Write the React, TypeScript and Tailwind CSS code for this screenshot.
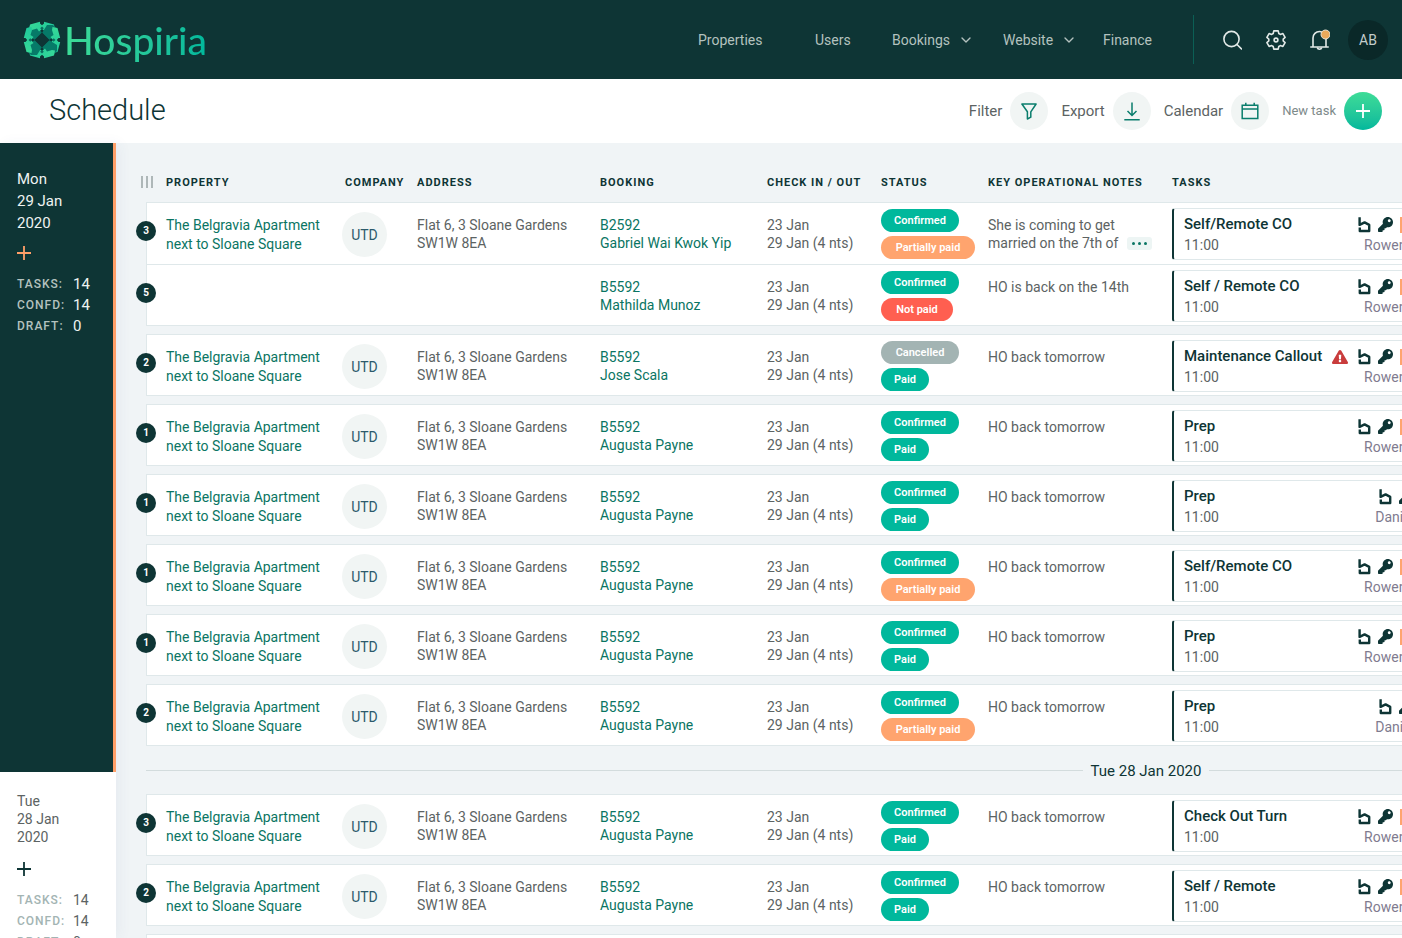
import { Fragment } from "react";
import type { ReactNode } from "react";
import clsx from "clsx";
import { ChevronDown } from "lucide-react";
import { FaExclamationTriangle, FaKey } from "react-icons/fa";

type Status = "Confirmed" | "Cancelled" | "Paid" | "Partially paid" | "Not paid";

type Booking = {
  count: number;
  property?: boolean;
  code: string;
  guest: string;
  status: Status;
  payment: Status;
  notes: string[];
  more?: boolean;
  task: string;
  person: string;
  warning?: boolean;
};

type Day = {
  label: string;
  groups: Booking[][];
};

const statusStyles: Record<Status, string> = {
  Confirmed: "bg-[#00b89c] w-[78px]",
  Cancelled: "bg-[#a3b4b3] w-[78px]",
  Paid: "bg-[#00b89c] w-12",
  "Partially paid": "bg-[#ffa46e] w-[94px]",
  "Not paid": "bg-[#ff5f50] w-[72px]",
};

const augusta = (
  count: number,
  payment: Status,
  task: string,
  person = "Rowena"
): Booking[] => [
  {
    count,
    property: true,
    code: "B5592",
    guest: "Augusta Payne",
    status: "Confirmed",
    payment,
    notes: ["HO back tomorrow"],
    task,
    person,
  },
];

const days: Day[] = [
  {
    label: "Mon 29 Jan 2020",
    groups: [
      [
        {
          count: 3,
          property: true,
          code: "B2592",
          guest: "Gabriel Wai Kwok Yip",
          status: "Confirmed",
          payment: "Partially paid",
          notes: ["She is coming to get", "married on the 7th of"],
          more: true,
          task: "Self/Remote CO",
          person: "Rowena",
        },
        {
          count: 5,
          code: "B5592",
          guest: "Mathilda Munoz",
          status: "Confirmed",
          payment: "Not paid",
          notes: ["HO is back on the 14th"],
          task: "Self / Remote CO",
          person: "Rowena",
        },
      ],
      [
        {
          count: 2,
          property: true,
          code: "B5592",
          guest: "Jose Scala",
          status: "Cancelled",
          payment: "Paid",
          notes: ["HO back tomorrow"],
          task: "Maintenance Callout",
          person: "Rowena",
          warning: true,
        },
      ],
      augusta(1, "Paid", "Prep"),
      augusta(1, "Paid", "Prep", "Daniel"),
      augusta(1, "Partially paid", "Self/Remote CO"),
      augusta(1, "Paid", "Prep"),
      augusta(2, "Partially paid", "Prep", "Daniel"),
    ],
  },
  {
    label: "Tue 28 Jan 2020",
    groups: [
      augusta(3, "Paid", "Check Out Turn"),
      augusta(2, "Paid", "Self / Remote"),
      augusta(1, "Paid", "Prep"),
    ],
  },
];

function Logo() {
  return (
    <a href="#home" className="flex items-center gap-[3px]">
      <svg width="38" height="38" viewBox="0 0 38 38" aria-hidden="true">
        <defs>
          <linearGradient id="mark" x1="0" x2="1" y1="0" y2="0">
            <stop offset="0" stopColor="#37d998" />
            <stop offset="1" stopColor="#1fc99b" />
          </linearGradient>
        </defs>
        {[0, 90, 180, 270].map((angle) => (
          <g key={angle} transform={`rotate(${angle} 19 19)`}>
            <path d="M4 8 8 4h6l5 8-7 7-8-5z" fill="#067a68" />
            <path
              d="M7 3.500 17 .8v1.700l2 1.700 2-1.700V.8l10 2.700 1 5-3 .5-5-1.500-2 3-3-2.500-3 2.500-2-3L9 9l-3-.5z"
              fill="url(#mark)"
            />
            <path d="m19 5.500 1.800 1.800L19 9.100l-1.800-1.800z" fill="#0a6d5f" />
          </g>
        ))}
        <path d="m19 11.500 7.500 7.500-7.500 7.500-7.500-7.500z" fill="#0e3535" />
      </svg>
      <span className="bg-gradient-to-r from-[#3ddc97] to-[#00b89c] bg-clip-text font-[Lato] text-[39px] leading-[48px] font-medium text-transparent">
        Hospiria
      </span>
    </a>
  );
}

function SearchIcon() {
  return (
    <svg width="20" height="20" viewBox="0 0 20 20" fill="none" stroke="currentColor" strokeWidth="1.600">
      <circle cx="9.500" cy="9" r="7.600" />
      <path d="m15 14.500 4.500 4.500" strokeLinecap="round" />
    </svg>
  );
}

function GearIcon() {
  return (
    <svg width="20" height="20" viewBox="0 0 20 20" fill="none" stroke="currentColor" strokeWidth="1.600" strokeLinejoin="round">
      <path d="M7.800 .9h4.400l.6 2.600 1.500.9 2.600-.8 2.200 3.800-1.900 1.700v1.800l1.900 1.700-2.200 3.800-2.600-.8-1.500.9-.6 2.600H7.800l-.6-2.600-1.500-.9-2.600.8L.9 12.600l1.900-1.700V9.100L.9 7.400l2.200-3.800 2.600.8 1.500-.9z" />
      <circle cx="10" cy="10" r="1.900" />
    </svg>
  );
}

function BellIcon() {
  return (
    <svg width="20" height="22" viewBox="0 0 20 22" fill="none" stroke="currentColor" strokeWidth="1.600">
      <path d="M.8 18h17.400M3 18V9a6.500 6.500 0 0 1 13 0v9" strokeLinecap="round" />
      <path d="M7.200 18.500a2.400 2.400 0 0 0 4.600 0" />
      <circle cx="15.500" cy="5.500" r="4.500" fill="#e9a95b" stroke="#e6e2d6" strokeWidth="1" />
    </svg>
  );
}

function PlusIcon() {
  return (
    <svg width="14" height="14" viewBox="0 0 14 14" stroke="currentColor" strokeWidth="1.800" aria-hidden="true">
      <path d="M7 0v14M0 7h14" />
    </svg>
  );
}

function HouseIcon() {
  return (
    <svg width="15" height="16" viewBox="0 0 15 16" fill="none" stroke="#0e3535" strokeWidth="2.400" strokeLinejoin="round" aria-hidden="true">
      <path d="M2.600 .3V7.900L7.600 5.400 12.200 7.900V14H2.800V10.400" />
    </svg>
  );
}

function Header() {
  const link = "flex items-center gap-2 text-sm text-[#b4c2bf]";

  return (
    <header className="flex h-[79px] shrink-0 items-center justify-between bg-[#0e3535] pr-[14px] pl-[23px]">
      <Logo />
      <div className="flex items-center">
        <nav className="grid grid-cols-[117px_77px_111px_100px_52px]">
          <a href="#properties" className={link}>Properties</a>
          <a href="#users" className={link}>Users</a>
          <button type="button" className={link}>
            Bookings
            <ChevronDown size={16} />
          </button>
          <button type="button" className={link}>
            Website
            <ChevronDown size={16} />
          </button>
          <a href="#finance" className={link}>Finance</a>
        </nav>
        <div className="ml-[38px] h-[49px] w-px bg-[#0b5f55]" />
        <div className="ml-7 flex items-center gap-6 text-[#e3eae8]">
          <button type="button" aria-label="Search"><SearchIcon /></button>
          <button type="button" aria-label="Settings"><GearIcon /></button>
          <button type="button" aria-label="Notifications"><BellIcon /></button>
        </div>
        <button
          type="button"
          className="ml-[18px] size-10 rounded-full bg-[#0a2828] text-sm text-[#c3cdcb]"
        >
          AB
        </button>
      </div>
    </header>
  );
}

function ToolbarButton({ label, children }: { label: string; children: ReactNode }) {
  return (
    <button type="button" className="flex items-center gap-2 text-[15px] text-[#5c6363]">
      {label}
      <span className="flex size-[38px] items-center justify-center rounded-full bg-[#f1f5f4] text-[#0a7d6c]">
        {children}
      </span>
    </button>
  );
}

function Toolbar() {
  return (
    <div className="flex h-16 shrink-0 items-center justify-between bg-white pr-5 pl-[49px]">
      <h1 className="text-[29px] font-light text-[#0e3535]">Schedule</h1>
      <div className="flex items-center gap-[13px]">
        <ToolbarButton label="Filter">
          <svg width="16" height="17" viewBox="0 0 16 17" fill="none" stroke="currentColor" strokeWidth="1.500" strokeLinejoin="round">
            <path d="M.9 1h14.200L9.800 8.800v5.400l-3.400 1.800V8.800z" />
          </svg>
        </ToolbarButton>
        <ToolbarButton label="Export">
          <svg width="16" height="19" viewBox="0 0 16 19" fill="none" stroke="currentColor" strokeWidth="1.500">
            <path d="M8 .5v13M3.500 9 8 13.500 12.500 9M.3 17.800h15.400" />
          </svg>
        </ToolbarButton>
        <ToolbarButton label="Calendar">
          <svg width="18" height="18" viewBox="0 0 18 18" fill="none" stroke="currentColor" strokeWidth="1.500">
            <path d="M1.200 3.200h15.600v13.400H1.200zM1.200 7h15.600M4.800 .8v2.400M13.200 .8v2.400" />
          </svg>
        </ToolbarButton>
        <button type="button" className="flex items-center gap-2 text-[13px] text-[#7d8a8a]">
          New task
          <span className="flex size-[38px] items-center justify-center rounded-full bg-gradient-to-b from-[#3ddc97] to-[#00b89c] text-white">
            <PlusIcon />
          </span>
        </button>
      </div>
    </div>
  );
}

function DayPanel({ date, active, totals }: { date: string[]; active?: boolean; totals: number[] }) {
  const labels = ["TASKS:", "CONFD:", "DRAFT:"];

  return (
    <section
      className={clsx(
        "shrink-0 pl-[17px]",
        active
          ? "h-[629px] border-r-[3px] border-[#ff9f68] bg-[#0e3535] pt-[25px] text-[15px] leading-[22px] text-[#eef3f2]"
          : "bg-white pt-5 pb-10 text-sm leading-[18px] text-[#5c6363]"
      )}
    >
      {date.map((line) => (
        <p key={line}>{line}</p>
      ))}
      <button
        type="button"
        aria-label="Add task"
        className={clsx("mb-[14px] block", active ? "mt-3 text-[#ff9f68]" : "mt-4 text-[#0e3535]")}
      >
        <PlusIcon />
      </button>
      <dl className="grid grid-cols-[56px_1fr] leading-[21px]">
        {labels.map((label, i) => (
          <Fragment key={label}>
            <dt
              className={clsx(
                "text-xs leading-[21px] font-medium tracking-[1px]",
                active ? "text-[#b4c2bf]" : "text-[#a3b4b3]"
              )}
            >
              {label}
            </dt>
            <dd>{totals[i]}</dd>
          </Fragment>
        ))}
      </dl>
    </section>
  );
}

function Pill({ status }: { status: Status }) {
  return (
    <span
      className={clsx(
        "block h-[23px] rounded-full text-center text-[11px] leading-[23px] font-semibold text-white",
        statusStyles[status]
      )}
    >
      {status}
    </span>
  );
}

function TaskCard({ booking }: { booking: Booking }) {
  return (
    <div className="flex h-[52px] justify-between rounded-[3px] border border-l-2 border-[#dfe8ea] border-l-[#0e3535] bg-white pt-[5px] pr-[21px] pl-[10px] leading-[21px]">
      <div>
        <h3 className="text-[15px] leading-[21px] font-medium text-[#0e3535]">{booking.task}</h3>
        <p>11:00</p>
      </div>
      <div className="flex flex-col items-end text-[#7f7b8f]">
        <div className="flex h-[21px] items-center gap-[6px]">
          {booking.warning && <FaExclamationTriangle size={16} className="mr-[3px] text-[#c93c3c]" />}
          <HouseIcon />
          <FaKey size={15} className="text-[#0e3535]" />
          {booking.person === "Rowena" && (
            <svg width="15" height="16" viewBox="0 0 15 16" fill="none" stroke="#ffa46e" strokeWidth="2">
              <path d="M2 1h12v14H2z" />
            </svg>
          )}
        </div>
        <p>{booking.person}</p>
      </div>
    </div>
  );
}

function BookingRow({ booking, last }: { booking: Booking; last: boolean }) {
  const cell = clsx("border-t border-[#dfe8ea] bg-white p-0 align-top", last && "border-b");
  const green = "text-[#0a7563]";

  return (
    <tr className="h-[62px]">
      <td className={clsx(cell, "relative border-l")}>
        <span className="absolute top-[18px] -left-[11px] size-5 rounded-full bg-[#0e3535] text-center text-[10px] leading-5 font-bold text-white">
          {booking.count}
        </span>
        {booking.property && (
          <a href="#property" className={clsx("block pt-[13px] pl-[19px] leading-[19px]", green)}>
            The Belgravia Apartment
            <br />
            next to Sloane Square
          </a>
        )}
      </td>
      <td className={cell}>
        {booking.property && (
          <div className="mt-[9px] flex size-[45px] items-center justify-center rounded-full bg-[#f1f5f4] text-[#2c5a6b]">
            UTD
          </div>
        )}
      </td>
      <td className={cell}>
        {booking.property && (
          <p className="pt-[13px]">
            Flat 6, 3 Sloane Gardens
            <br />
            SW1W 8EA
          </p>
        )}
      </td>
      <td className={cell}>
        <a href="#booking" className={clsx("block pt-[13px]", green)}>
          {booking.code}
          <br />
          {booking.guest}
        </a>
      </td>
      <td className={cell}>
        <p className="pt-[13px]">
          23 Jan
          <br />
          29 Jan (4 nts)
        </p>
      </td>
      <td className={cell}>
        <div className="flex flex-col gap-1 pt-[6px]">
          <Pill status={booking.status} />
          <Pill status={booking.payment} />
        </div>
      </td>
      <td className={cell}>
        <div className="pt-[13px]">
          {booking.notes.map((line, i) => (
            <p key={line} className="flex items-center gap-[9px]">
              {line}
              {booking.more && i === booking.notes.length - 1 && (
                <button
                  type="button"
                  aria-label="Show full note"
                  className="flex h-[13px] w-[25px] items-center justify-center gap-[3px] rounded-[3px] bg-[#edf5f4]"
                >
                  <span className="size-[3px] rounded-full bg-[#0a7563]" />
                  <span className="size-[3px] rounded-full bg-[#0a7563]" />
                  <span className="size-[3px] rounded-full bg-[#0a7563]" />
                </button>
              )}
            </p>
          ))}
        </div>
      </td>
      <td className={clsx(cell, "pt-[5px]")}>
        <TaskCard booking={booking} />
      </td>
      <td className={cell} />
    </tr>
  );
}

function ScheduleTable() {
  const heading = "p-0 pt-[2px] font-bold";

  return (
    <table className="w-[2000px] table-fixed border-separate border-spacing-0 text-left text-sm leading-[18px] text-[#5c6363]">
      <colgroup>
        <col className="w-[196px]" />
        <col className="w-[75px]" />
        <col className="w-[183px]" />
        <col className="w-[167px]" />
        <col className="w-[114px]" />
        <col className="w-[107px]" />
        <col className="w-[184px]" />
        <col className="w-[264px]" />
        <col />
      </colgroup>
      <thead>
        <tr className="h-10 text-[11px] tracking-[1px] text-[#0e3535]">
          <th className={clsx(heading, "relative pl-5")}>
            {/* column handle */}
            <span className="absolute top-[14px] -left-[5px] flex gap-[3px]">
              <span className="h-3 w-[2px] bg-[#aeb7b8]" />
              <span className="h-3 w-[2px] bg-[#aeb7b8]" />
              <span className="h-3 w-[2px] bg-[#aeb7b8]" />
            </span>
            PROPERTY
          </th>
          <th className={clsx(heading, "pl-[3px]")}>COMPANY</th>
          <th className={heading}>ADDRESS</th>
          <th className={heading}>BOOKING</th>
          <th className={heading}>CHECK IN / OUT</th>
          <th className={heading}>STATUS</th>
          <th className={heading}>KEY OPERATIONAL NOTES</th>
          <th className={heading}>TASKS</th>
          <th className={heading} />
        </tr>
      </thead>
      {days.map((day, d) => (
        <tbody key={day.label}>
          {d > 0 && (
            <tr>
              <td colSpan={9} className="p-0">
                <div className="flex h-12 items-center gap-2 pt-px text-[15px] text-[#0e3535]">
                  <span className="h-px flex-1 bg-[#d3dcdd]" />
                  {day.label}
                  <span className="h-px flex-1 bg-[#d3dcdd]" />
                </div>
              </td>
            </tr>
          )}
          {day.groups.map((group, g) => (
            <Fragment key={g}>
              {g > 0 && (
                <tr className="h-2">
                  <td colSpan={9} className="p-0" />
                </tr>
              )}
              {group.map((booking, b) => (
                <BookingRow key={b} booking={booking} last={b === group.length - 1} />
              ))}
            </Fragment>
          ))}
        </tbody>
      ))}
    </table>
  );
}

export default function App() {
  return (
    <div className="flex h-screen flex-col overflow-hidden bg-[#f0f4f6] font-[Roboto,sans-serif]">
      <Header />
      <Toolbar />
      <div className="flex min-h-0 flex-1">
        <aside className="flex w-[116px] shrink-0 flex-col bg-white shadow-[4px_0_12px_rgba(60,80,140,0.05)]">
          <DayPanel date={["Mon", "29 Jan", "2020"]} active totals={[14, 14, 0]} />
          <DayPanel date={["Tue", "28 Jan", "2020"]} totals={[14, 14, 0]} />
        </aside>
        <main className="min-w-0 flex-1 overflow-hidden pt-[19px] pl-[30px]">
          <ScheduleTable />
        </main>
      </div>
    </div>
  );
}
